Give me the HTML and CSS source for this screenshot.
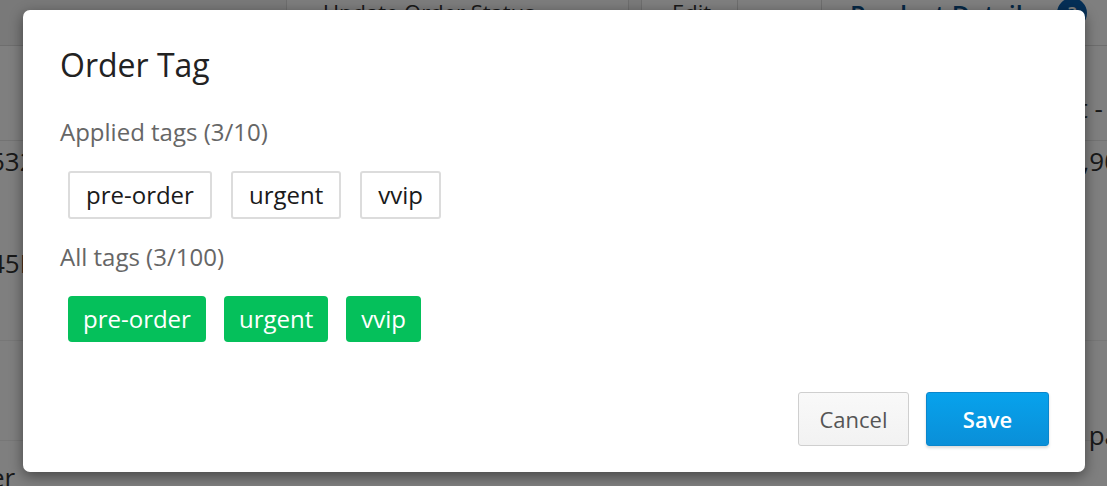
FILE: index.html
```html
<!DOCTYPE html>
<html>
<head>
<meta charset="utf-8">
<link rel="stylesheet" href="styles.css">
</head>
<body>
<div class="page">
  <div class="topbar">
    <div class="tb-left"></div>
    <div class="tb-status">Update Order Status <span class="caret">▲</span></div>
    <div class="tb-sep"></div>
    <div class="tb-edit">Edit</div>
    <div class="tb-gap"></div>
    <div class="tb-detail">Product Details <span class="help">?</span></div>
  </div>
  <div class="rows">
    <div class="row r1"><span class="l">&nbsp;</span><span class="r">et -</span></div>
    <div class="row r2"><span class="l">532</span><span class="r">,90</span></div>
    <div class="row r3"><span class="l">45F</span><span class="r"></span></div>
    <div class="row r4"><span class="l"></span><span class="r">pa</span></div>
    <div class="row r5"><span class="l">er</span><span class="r"></span></div>
  </div>
</div>
<div class="overlay"></div>
<div class="modal">
  <h1 class="title">Order Tag</h1>
  <div class="label">Applied tags (3/10)</div>
  <div class="tags applied">
    <span class="tag outline">pre-order</span>
    <span class="tag outline">urgent</span>
    <span class="tag outline">vvip</span>
  </div>
  <div class="label label2">All tags (3/100)</div>
  <div class="tags all">
    <span class="tag green">pre-order</span>
    <span class="tag green">urgent</span>
    <span class="tag green">vvip</span>
  </div>
  <div class="footer">
    <button class="btn cancel">Cancel</button>
    <button class="btn save">Save</button>
  </div>
</div>
</body>
</html>
```
FILE: styles.css
```css
* { box-sizing: border-box; }
html, body { margin: 0; padding: 0; }
body {
  width: 1107px;
  height: 486px;
  overflow: hidden;
  font-family: "Open Sans", "Liberation Sans", sans-serif;
  background: #fff;
  position: relative;
}
.page { width: 1107px; height: 486px; color: #333; }
.topbar {
  display: flex;
  height: 46px;
  border-bottom: 1px solid #ddd;
  font-size: 22px;
  line-height: 24px;
  align-items: stretch;
}
.tb-left { width: 287px; background: #f2f2f2; border-right: 1px solid #ddd; }
.tb-status { width: 341px; padding: 0 0 0 36px; background: #fafafa; }
.caret { font-size: 14px; margin-left: 62px; }
.tb-sep { width: 14px; border-left: 1px solid #ddd; border-right: 1px solid #ddd; background: #f5f5f5; }
.tb-edit { width: 96px; padding: 0 0 0 30px; border-right: 1px solid #ddd; }
.tb-gap { width: 84px; border-right: 1px solid #ddd; }
.tb-detail { flex: 1; padding: 2px 0 0 28px; color: #0a4f8a; font-weight: 600; font-size: 25px; }
.help { display: inline-block; width: 30px; height: 30px; border-radius: 50%; background: #0a5fae; color: #fff; text-align: center; font-size: 18px; line-height: 30px; margin-left: 16px; vertical-align: top; margin-top: -4px; }
.rows { font-size: 26px; }
.row { display: flex; justify-content: space-between; border-bottom: 1px solid #e6e6e6; }
.row .l { margin-left: -10px; }
.row .r { margin-right: -12px; }
.r1 .r { margin-right: 4px; }
.r1 { height: 95px; padding-top: 44px; }
.r2 { height: 100px; padding-top: 2px; border-bottom: none; }
.r3 { height: 100px; padding-top: 4px; border-bottom: 1px solid #eee; }
.r4 { height: 100px; padding-top: 76px; border-bottom: 1px solid #eee; }
.r5 { padding-top: 18px; }
.overlay {
  position: absolute;
  inset: 0;
  background: rgba(0, 0, 0, 0.5);
}
.modal {
  position: absolute;
  left: 23px;
  top: 10px;
  width: 1062px;
  height: 462px;
  background: #fff;
  border-radius: 7px;
  box-shadow: 0 4px 14px rgba(0, 0, 0, 0.45);
  padding: 35px 36px 26px 37px;
  display: flex;
  flex-direction: column;
}
.title {
  margin: 0;
  font-size: 32px;
  font-weight: 400;
  color: #222;
  line-height: 40px;
}
.label {
  margin-top: 32px;
  font-size: 24px;
  color: #666;
  line-height: 30px;
}
.label2 { margin-top: 23px; }
.tags {
  display: flex;
  padding-left: 8px;
  margin-top: 24px;
}
.applied { gap: 19px; }
.all { gap: 18px; }
.tag {
  font-size: 24px;
  line-height: 1;
  display: inline-flex;
  align-items: center;
  border-radius: 3px;
}
.outline {
  height: 48px;
  padding: 0 16px;
  border: 2px solid #dcdcdc;
  color: #1a1a1a;
}
.green {
  height: 46px;
  padding: 0 15px;
  background: #05c05b;
  color: #fff;
  border-radius: 4px;
}
.footer {
  margin-top: auto;
  display: flex;
  justify-content: flex-end;
  gap: 17px;
}
.btn {
  font-family: "Open Sans", "Liberation Sans", sans-serif;
  height: 54px;
  font-size: 22px;
  border-radius: 3px;
  cursor: pointer;
}
.cancel {
  width: 111px;
  background: linear-gradient(#f9f9f9, #f2f2f2);
  border: 1px solid #cfcfcf;
  color: #555;
}
.save {
  width: 123px;
  background: linear-gradient(#07a2ec, #0a8fd8);
  border: 1px solid #0a86cc;
  color: #fff;
  font-weight: 600;
  box-shadow: 0 2px 3px rgba(0, 0, 0, 0.15);
}
```
